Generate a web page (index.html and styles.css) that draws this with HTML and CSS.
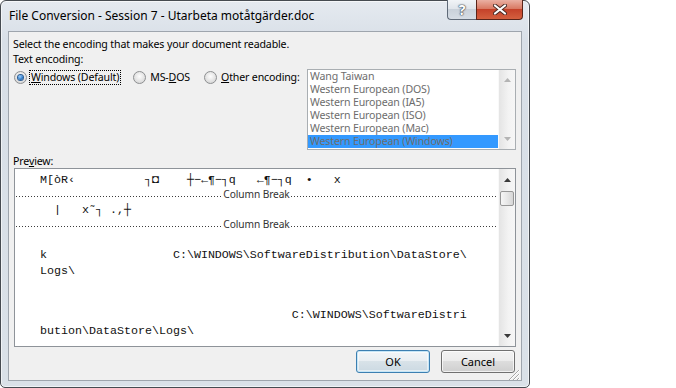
FILE: index.html
```html
<!DOCTYPE html>
<html lang="en">
<head>
    <meta charset="UTF-8">
    <title>File Conversion</title>
    <link rel="stylesheet" href="styles.css">
</head>
<body>
    <div class="window">
        <div class="titlebar">
            <span class="title">File Conversion - Session 7 - Utarbeta motåtgärder.doc</span>
            <div class="caption-btns">
                <div class="cap-btn help">?</div>
                <div class="cap-btn close">
                    <svg width="14" height="11" viewBox="0 0 14 11">
                        <path d="M2 1.5L12 9.5M12 1.5L2 9.5" stroke="#4a2b25" stroke-width="4" stroke-linecap="round"/>
                        <path d="M2 1.5L12 9.5M12 1.5L2 9.5" stroke="#fff" stroke-width="2.2" stroke-linecap="round"/>
                    </svg>
                </div>
            </div>
        </div>

        <div class="client">
            <p class="line">Select the encoding that makes your document readable.</p>
            <p class="line">Text encoding:</p>

            <div class="encoding-row">
                <div class="radios">
                    <label class="radio-opt">
                        <span class="radio checked"></span>
                        <span class="radio-text focused"><u>W</u>indows (Default)</span>
                    </label>
                    <label class="radio-opt">
                        <span class="radio"></span>
                        <span class="radio-text">MS-<u>D</u>OS</span>
                    </label>
                    <label class="radio-opt">
                        <span class="radio"></span>
                        <span class="radio-text"><u>O</u>ther encoding:</span>
                    </label>
                </div>

                <div class="listbox">
                    <div class="list-items">
                        <div class="list-item">Wang Taiwan</div>
                        <div class="list-item">Western European (DOS)</div>
                        <div class="list-item">Western European (IA5)</div>
                        <div class="list-item">Western European (ISO)</div>
                        <div class="list-item">Western European (Mac)</div>
                        <div class="list-item selected">Western European (Windows)</div>
                    </div>
                    <div class="vscroll disabled">
                        <div class="sb-btn list-up"><svg width="7" height="4" viewBox="0 0 7 4"><path d="M0 4L3.5 0L7 4Z"/></svg></div>
                        <div class="sb-track"></div>
                        <div class="sb-btn list-down"><svg width="7" height="4" viewBox="0 0 7 4"><path d="M0 0L7 0L3.5 4Z"/></svg></div>
                    </div>
                </div>
            </div>

            <p class="line preview-label">Pre<u>v</u>iew:</p>

            <div class="preview">
                <div class="preview-doc">
                    <div class="doc-line first">M[òR‹          ┐◘    ┼−←¶−┐q   ←¶−┐q  •   x</div>
                    <div class="col-break"><span class="dots"></span><span class="cb-label">Column Break</span><span class="dots"></span></div>
                    <div class="doc-line after-break">  |   x˜┐ .,┼</div>
                    <div class="col-break"><span class="dots"></span><span class="cb-label">Column Break</span><span class="dots"></span></div>
                    <div class="doc-line para">k                  C:\WINDOWS\SoftwareDistribution\DataStore\</div>
                    <div class="doc-line">Logs\</div>
                    <div class="doc-line para-wide">                                    C:\WINDOWS\SoftwareDistri</div>
                    <div class="doc-line">bution\DataStore\Logs\</div>
                </div>
                <div class="vscroll">
                    <div class="sb-btn prev-up"><svg width="7" height="4" viewBox="0 0 7 4"><path d="M0 4L3.5 0L7 4Z"/></svg></div>
                    <div class="sb-thumb"></div>
                    <div class="sb-track"></div>
                    <div class="sb-btn prev-down"><svg width="7" height="4" viewBox="0 0 7 4"><path d="M0 0L7 0L3.5 4Z"/></svg></div>
                </div>
            </div>

            <div class="buttons">
                <button class="btn default">OK</button>
                <button class="btn">Cancel</button>
            </div>

            <!-- size grip -->
            <svg class="grip" width="11" height="11" viewBox="0 0 11 11">
                <path d="M11 1L1 11M11 5L5 11M11 9L9 11" stroke="#fff" stroke-width="1"/>
                <path d="M10 1L0 11M10 5L4 11M10 9L8 11" stroke="#a6a6a6" stroke-width="1"/>
            </svg>
        </div>
    </div>
</body>
</html>
```

FILE: styles.css
```css
* {
    box-sizing: border-box;
}

body {
    margin: 0;
    background-color: #fff;
    font-family: 'Noto Sans', 'Open Sans', sans-serif;
    font-size: 10.6px;
    letter-spacing: -0.15px;
    color: #000;
}

.window {
    width: 530px;
    height: 388px;
    border: 1px solid #464b51;
    border-radius: 6px 6px 5px 5px;
    background: linear-gradient(#e5eaf0, #d8dfe7 40px, #dae1e8);
    box-shadow: inset 0 0 0 1px rgba(255, 255, 255, 0.6);
    display: flex;
    flex-direction: column;
}

.titlebar {
    height: 30px;
    display: flex;
    justify-content: space-between;
    align-items: flex-start;
    padding: 0 6px 0 8px;
}

.title {
    font-size: 12px;
    letter-spacing: 0;
    line-height: 29px;
    white-space: nowrap;
}

.caption-btns {
    display: flex;
    margin-top: -1px;
}

.cap-btn {
    height: 20px;
    display: flex;
    justify-content: center;
    align-items: center;
    border: 1px solid #5f6a78;
    border-top: none;
}

.help {
    width: 29px;
    border-right: none;
    border-radius: 0 0 0 4px;
    background: linear-gradient(#f1f4f7, #e0e5eb 45%, #c9d1da 50%, #d6dde5);
    color: #fff;
    font-size: 14px;
    font-weight: bold;
    text-shadow: 0 0 1px #3a4350, 0 0 1px #3a4350, 0 0 2px #3a4350;
}

.close {
    width: 47px;
    border-color: #5a2419;
    border-radius: 0 0 4px 0;
    background: linear-gradient(#eab0a3, #d97a64 45%, #c5422a 50%, #d4603f);
}

.client {
    position: relative;
    margin: 0 7px;
    height: 350px;
    border: 1px solid #9ea5ad;
    background-color: #f0f0f0;
    padding: 5px 5px 0 4px;
}

.line {
    margin: 0;
    line-height: 15px;
    white-space: nowrap;
}

.encoding-row {
    display: flex;
    justify-content: space-between;
    align-items: flex-start;
    margin-top: 2px;
}

.radios {
    display: flex;
    flex-shrink: 0;
    margin-top: 1px;
    line-height: 13px;
    white-space: nowrap;
}

.radio-opt {
    display: flex;
    align-items: center;
    margin-right: 12px;
}

.radio-opt:first-child {
    margin-left: 1px;
}

.radio-opt:last-child {
    margin-right: 0;
}

.radio {
    width: 13px;
    height: 13px;
    border-radius: 50%;
    border: 1px solid #8d8f91;
    background: radial-gradient(circle at 50% 40%, #fdfdfd, #dcdcdc 70%, #cfcfcf);
    display: flex;
    justify-content: center;
    align-items: center;
    margin-right: 2px;
}

.radio.checked::after {
    content: '';
    width: 5px;
    height: 5px;
    border-radius: 50%;
    background: radial-gradient(circle at 40% 35%, #9fd2ff, #2a78c8 60%, #0c3d78);
    box-shadow: 0 0 0 1px #2c5d93;
}

.radio-text {
    padding: 0 1px;
    border: 1px solid transparent;
}

.radio-text.focused {
    border: 1px dotted #000;
}

.listbox {
    width: 209px;
    height: 81px;
    flex-shrink: 0;
    border: 1px solid #a9aeb2;
    background-color: #fff;
    display: flex;
}

.list-items {
    flex: 1;
    color: #6d6d6d;
    line-height: 13px;
}

.list-item {
    height: 13px;
    padding-left: 2px;
    white-space: nowrap;
}

.list-item.selected {
    background-color: #3399ff;
}

.vscroll {
    width: 17px;
    display: flex;
    flex-direction: column;
    background: linear-gradient(to right, #e4e4e4, #f3f3f3 60%, #f6f6f6);
    border-left: 1px solid #f9f9f9;
}

.sb-btn {
    display: flex;
    justify-content: center;
    align-items: center;
    height: 20px;
    fill: #3a3a3a;
}

.vscroll.disabled .sb-btn {
    fill: #b4b4b4;
}

.sb-btn.prev-up {
    height: 22px;
}

.sb-track {
    flex: 1;
}

.sb-thumb {
    height: 15px;
    margin: 0 1px;
    border: 1px solid #979797;
    border-radius: 2px;
    background: linear-gradient(to right, #f6f6f6, #e8e8e8 50%, #d6d6d6);
}

.preview-label {
    margin-top: 4px;
    line-height: 14px;
}

.preview {
    margin-left: 1px;
    height: 179px;
    border: 1px solid #8e9399;
    background-color: #fff;
    display: flex;
}

.preview-doc {
    flex: 1;
    padding-top: 3px;
    font-family: 'Liberation Mono', 'DejaVu Sans Mono', monospace;
    font-size: 11.67px;
    letter-spacing: 0;
    color: #111;
}

.doc-line {
    height: 16px;
    line-height: 16px;
    padding-left: 25px;
    white-space: pre;
}

.doc-line.after-break {
    margin-top: 2px;
}

.doc-line.para {
    margin-top: 17px;
}

.doc-line.para-wide {
    margin-top: 28px;
}

.col-break {
    display: flex;
    align-items: center;
    height: 12px;
    margin: 0 1px;
    color: #333;
    font-family: 'Noto Sans', 'Open Sans', sans-serif;
    font-size: 10.2px;
    letter-spacing: -0.1px;
    line-height: 12px;
}

.col-break .dots {
    flex: 1;
    height: 1px;
    margin-top: 4px;
    background: repeating-linear-gradient(to right, #3c3c3c 0 1px, transparent 1px 3px);
}

.cb-label {
    padding: 0 1px;
}

.buttons {
    display: flex;
    justify-content: flex-end;
    gap: 11px;
    margin-top: 3px;
    padding-right: 1px;
}

.btn {
    width: 74px;
    height: 23px;
    border: 1px solid #707070;
    border-radius: 3px;
    background: linear-gradient(#f2f2f2, #ebebeb 50%, #dddddd 50%, #cfcfcf);
    box-shadow: inset 0 0 0 1px rgba(255, 255, 255, 0.7);
    font-family: 'Noto Sans', 'Open Sans', sans-serif;
    font-size: 11px;
    color: #000;
    padding: 0;
}

.btn.default {
    border-color: #3c7fb1;
    box-shadow: inset 0 0 0 1px #c6e6f7, inset 0 0 0 2px rgba(255, 255, 255, 0.5);
    background: linear-gradient(#f2f5f7, #e8eef2 50%, #d8e2e8 50%, #cbd9e2);
}

.grip {
    position: absolute;
    right: 1px;
    bottom: 0;
}
```
